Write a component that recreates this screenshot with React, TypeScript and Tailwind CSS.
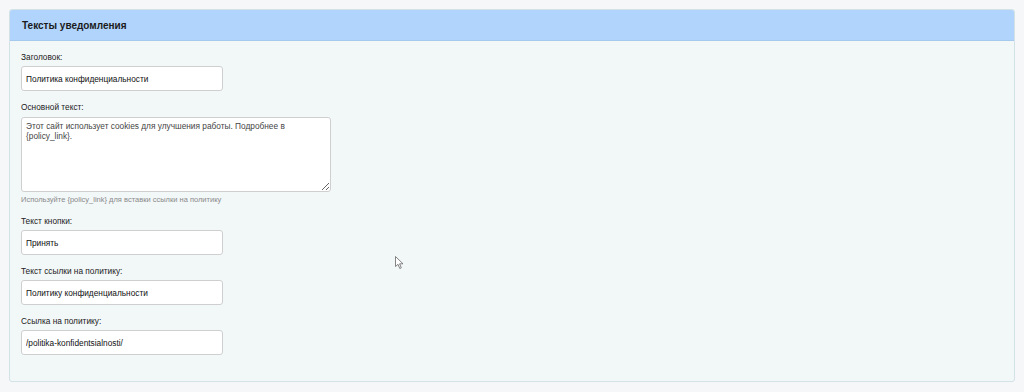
import { useState } from "react";

function Field({
  label,
  value,
  onChange,
}: {
  label: string;
  value: string;
  onChange: (v: string) => void;
}) {
  return (
    <div>
      <label className="block text-[8.3px] leading-[12px] text-[#222] mb-[3px]">{label}</label>
      <input
        value={value}
        onChange={(e) => onChange(e.target.value)}
        className="block w-[202px] h-[25px] px-[4px] bg-white border border-[#cfcfcf] rounded-[3px] text-[8.3px] text-[#111] outline-none"
      />
    </div>
  );
}

export default function App() {
  const [form, setForm] = useState({
    title: "Политика конфиденциальности",
    body: "Этот сайт использует cookies для улучшения работы. Подробнее в {policy_link}.",
    button: "Принять",
    linkText: "Политику конфиденциальности",
    link: "/politika-konfidentsialnosti/",
  });

  function update(field: string, value: string) {
    setForm((prev) => ({ ...prev, [field]: value }));
  }

  return (
    <main
      className="relative min-h-[392px] bg-[#f5f7f8] pt-[9px] px-[9px] pb-[10px]"
      style={{ fontFamily: '"Liberation Sans", Arial, sans-serif' }}
    >
      <section className="border border-[#d3e2e6] rounded-[3px] bg-[#f2f7f8] overflow-hidden">
        <div className="h-[31px] flex items-center px-[12px] bg-[#b0d4fb] border-b border-[#a6c9ee]">
          <h2 className="text-[10px] font-bold text-[#1b1b1b]">Тексты уведомления</h2>
        </div>

        <div className="flex flex-col gap-[10px] pt-[10px] px-[11px] pb-[26px]">
          <Field label="Заголовок:" value={form.title} onChange={(v) => update("title", v)} />

          <div>
            <label className="block text-[8.3px] leading-[12px] text-[#222] mb-[4px]">Основной текст:</label>
            <textarea
              value={form.body}
              onChange={(e) => update("body", e.target.value)}
              className="block w-[310px] h-[75px] px-[4px] py-[3px] bg-white border border-[#cfcfcf] rounded-[3px] text-[8.3px] leading-[10px] text-[#444] outline-none"
            />
            <p className="mt-[3px] text-[7.5px] leading-[10px] text-[#8a8a8a]">
              Используйте {"{policy_link}"} для вставки ссылки на политику
            </p>
          </div>

          <Field label="Текст кнопки:" value={form.button} onChange={(v) => update("button", v)} />
          <Field label="Текст ссылки на политику:" value={form.linkText} onChange={(v) => update("linkText", v)} />
          <Field label="Ссылка на политику:" value={form.link} onChange={(v) => update("link", v)} />
        </div>
      </section>

      {/* mouse pointer caught in the screenshot */}
      <svg className="absolute left-[395px] top-[256px]" width="10" height="14" viewBox="0 0 10 14">
        <path d="M0.5 0.5 L0.5 10.5 L3 8.3 L4.8 12.5 L6.3 11.8 L4.6 7.8 L8 7.8 Z" fill="#fff" stroke="#666" strokeWidth="0.8" />
      </svg>
    </main>
  );
}
